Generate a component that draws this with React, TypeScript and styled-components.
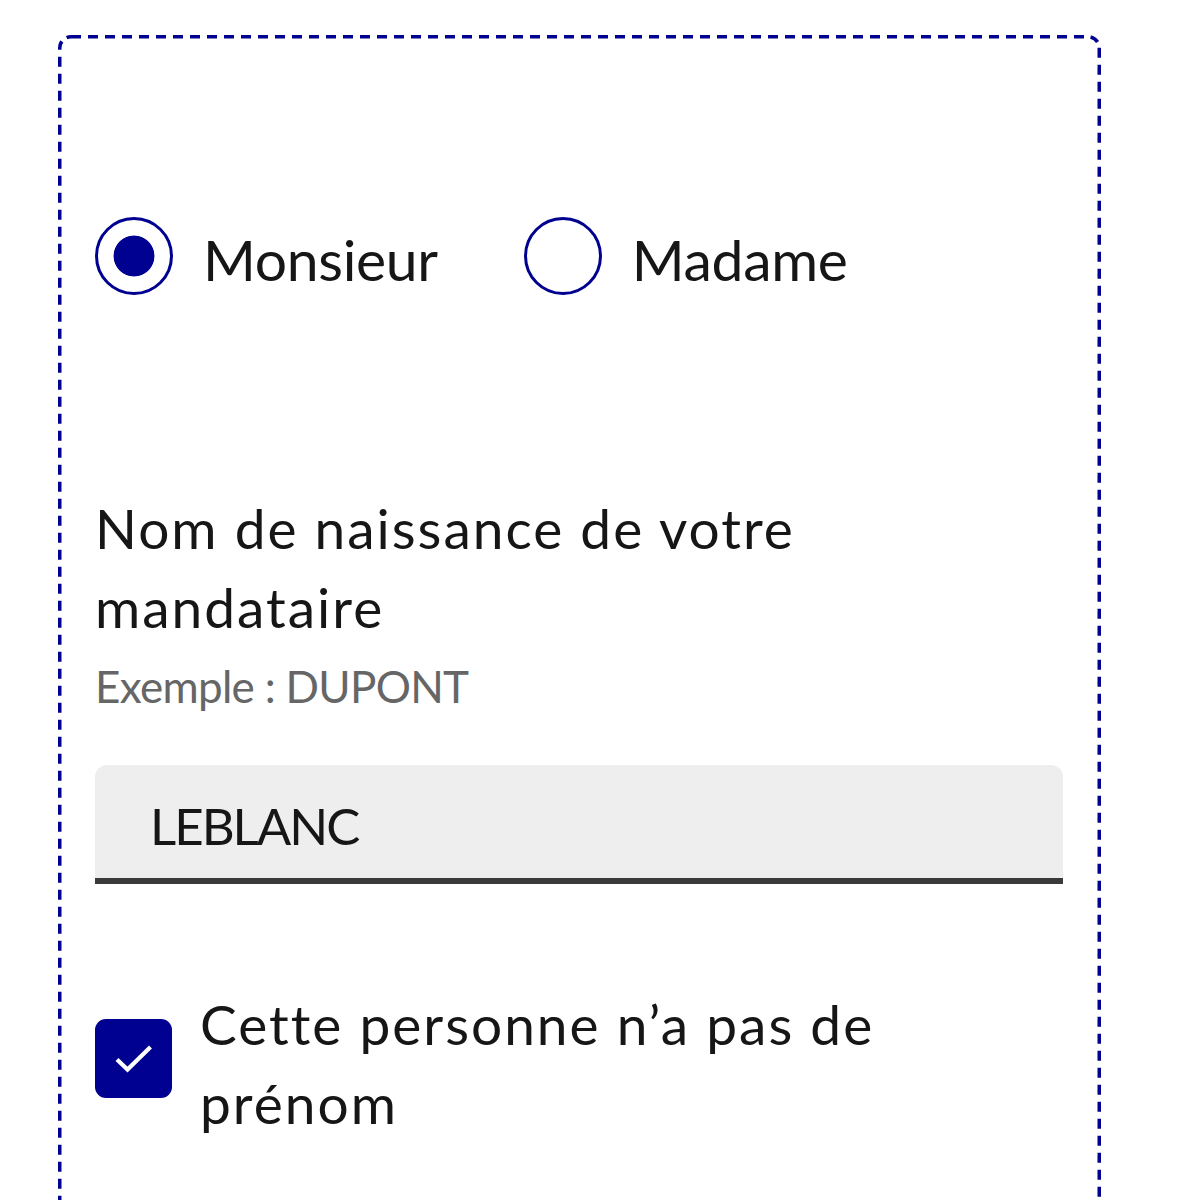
import React from "react";
import styled, { createGlobalStyle } from "styled-components";

const Global = createGlobalStyle`
  html, body { margin: 0; padding: 0; background: #ffffff; }
  body { font-family: "Lato", "Noto Sans", "Liberation Sans", sans-serif; color: #161616; }
  * { box-sizing: border-box; }
`;

const dashed = encodeURIComponent(
  "<svg xmlns='http://www.w3.org/2000/svg' width='100%' height='100%'><rect width='100%' height='100%' fill='none' rx='13' ry='13' stroke='#000091' stroke-width='7' stroke-dasharray='10 7'/></svg>"
);

const Page = styled.div`
  padding: 35px 0 0 58px;
  height: 1200px;
  overflow: hidden;
`;

const Fieldset = styled.div`
  width: 1043px;
  min-height: 1300px;
  border-radius: 13px;
  background-image: url("data:image/svg+xml,${dashed}");
  background-repeat: no-repeat;
  padding: 179px 38px 0 37px;
`;

const RadioGroup = styled.div`
  display: flex;
  align-items: center;
  gap: 86px;
`;

const RadioLabel = styled.label`
  display: flex;
  align-items: center;
  gap: 30px;
  cursor: pointer;
`;

const RadioText = styled.span`
  font-size: 57px;
  line-height: 78px;
  letter-spacing: -0.3px;
  color: #161616;
  padding-top: 6px;
`;

const RadioInput = styled.input.attrs({ type: "radio" })`
  appearance: none;
  margin: 0;
  width: 78px;
  height: 78px;
  border-radius: 50%;
  border: 3px solid #000091;
  background: #fff;
  flex: none;
  &:checked {
    background: radial-gradient(circle, #000091 0 20px, #fff 20.8px);
  }
`;

const Field = styled.div`
  margin-top: 191px;
  display: flex;
  flex-direction: column;
`;

const FieldLabel = styled.label`
  font-size: 55px;
  line-height: 79px;
  letter-spacing: 2px;
  max-width: 860px;
  color: #161616;
`;

const Hint = styled.span`
  display: block;
  margin-top: 7px;
  font-size: 44px;
  line-height: 64px;
  letter-spacing: -0.7px;
  color: #666666;
`;

const TextInput = styled.input`
  margin-top: 47px;
  width: 968px;
  height: 119px;
  border: none;
  border-bottom: 6px solid #3a3a3a;
  border-radius: 12px 12px 0 0;
  background: #eeeeee;
  padding: 8px 0 0 55px;
  font-family: inherit;
  font-size: 51px;
  letter-spacing: -2px;
  color: #161616;
  outline: none;
`;

const CheckRow = styled.label`
  margin-top: 101px;
  display: flex;
  align-items: flex-start;
  gap: 28px;
  cursor: pointer;
`;

const CheckBox = styled.span`
  flex: none;
  margin-top: 34px;
  width: 77px;
  height: 79px;
  border-radius: 11px;
  background: #000091;
  display: grid;
  place-items: center;
`;

const CheckText = styled.span`
  font-size: 55px;
  line-height: 79px;
  letter-spacing: 2px;
  max-width: 760px;
  color: #161616;
`;

export default function App() {
  return (
    <Page>
      <Global />
      <Fieldset>
        <RadioGroup>
          <RadioLabel>
            <RadioInput name="civ" defaultChecked />
            <RadioText>Monsieur</RadioText>
          </RadioLabel>
          <RadioLabel>
            <RadioInput name="civ" />
            <RadioText>Madame</RadioText>
          </RadioLabel>
        </RadioGroup>
        <Field>
          <FieldLabel htmlFor="nom">
            Nom de naissance de votre mandataire
            <Hint>Exemple : DUPONT</Hint>
          </FieldLabel>
          <TextInput id="nom" defaultValue="LEBLANC" />
        </Field>
        <CheckRow>
          <CheckBox>
            <svg width="40" height="30" viewBox="0 0 40 30" fill="none">
              <path d="M3 15.5 L13.5 25.5 L36.5 3" stroke="#fff" strokeWidth="4.2" />
            </svg>
          </CheckBox>
          <CheckText>Cette personne n’a pas de prénom</CheckText>
        </CheckRow>
      </Fieldset>
    </Page>
  );
}
